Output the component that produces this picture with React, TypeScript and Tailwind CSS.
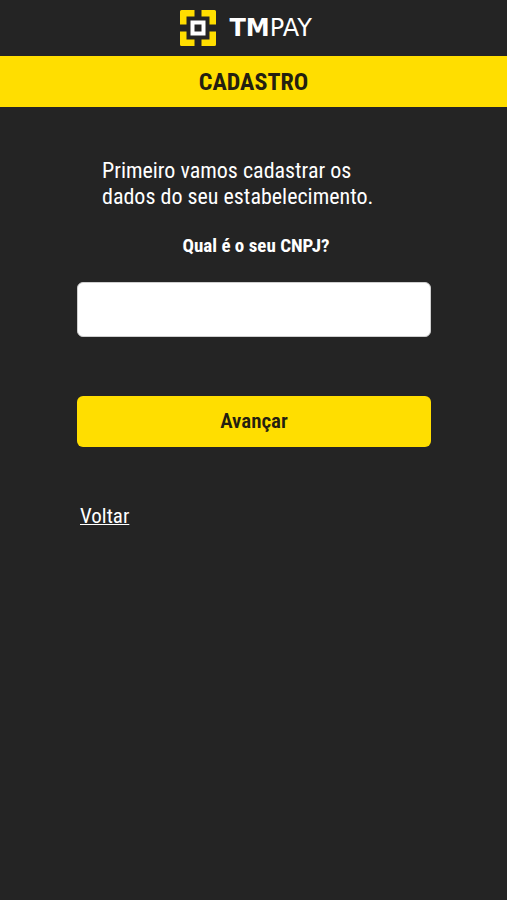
function LogoMark() {
  return (
    <svg viewBox="0 0 36 36" className="size-9 shrink-0" aria-hidden="true">
      <g fill="#ffde00">
        <path d="M1.5 0H14.5V6.5H6.5V14.5H0V1.5Q0 0 1.5 0Z" />
        <path d="M21.500 0H34.5Q36 0 36 1.5V14.5H29.5V6.5H21.500Z" />
        <path d="M0 21.5H6.500V29.5H14.500V36H1.5Q0 36 0 34.5Z" />
        <path d="M29.500 21.5H36V34.5Q36 36 34.5 36H21.500V29.5H29.500Z" />
      </g>
      <rect x="12.5" y="12.5" width="11" height="11" fill="none" stroke="#ffffff" strokeWidth="4" />
    </svg>
  );
}

export default function App() {
  return (
    <div className="min-h-screen bg-[#242424] font-['Roboto_Condensed',Roboto,sans-serif] text-white">
      <header className="flex h-14 items-center justify-center gap-3.5">
        <LogoMark />
        <span className="flex min-w-[98px] font-['DejaVu_Sans',sans-serif] text-2xl leading-7">
          <span className="font-bold">TM</span>
          <span>PAY</span>
        </span>
      </header>

      <h1 className="bg-[#ffde00] pt-[13px] pb-3 text-center text-2xl leading-[26px] font-bold text-[#242010]">
        CADASTRO
      </h1>

      <main className="pt-[51px] pr-[76px] pl-[77px]">
        <form className="flex flex-col" onSubmit={(event) => event.preventDefault()}>
          <p className="px-[25px] text-[22px] leading-[26px]">
            Primeiro vamos cadastrar os dados do seu estabelecimento.
          </p>
          <label htmlFor="cnpj" className="mt-6 pl-1 text-center text-[19px] leading-6 font-bold">
            Qual é o seu CNPJ?
          </label>
          <input
            id="cnpj"
            name="cnpj"
            type="text"
            inputMode="numeric"
            className="mt-6 h-[55px] rounded-md border border-[#cfcfcf] bg-white px-4 text-xl text-[#242424]"
          />
          <button
            type="submit"
            className="mt-[59px] h-[51px] rounded-md bg-[#ffde00] text-[21px] font-semibold text-[#242010]"
          >
            Avançar
          </button>
        </form>
        <a
          href="#voltar"
          className="mt-14 ml-[3px] inline-block text-[21px] leading-[26px] underline decoration-1"
        >
          Voltar
        </a>
      </main>
    </div>
  );
}
